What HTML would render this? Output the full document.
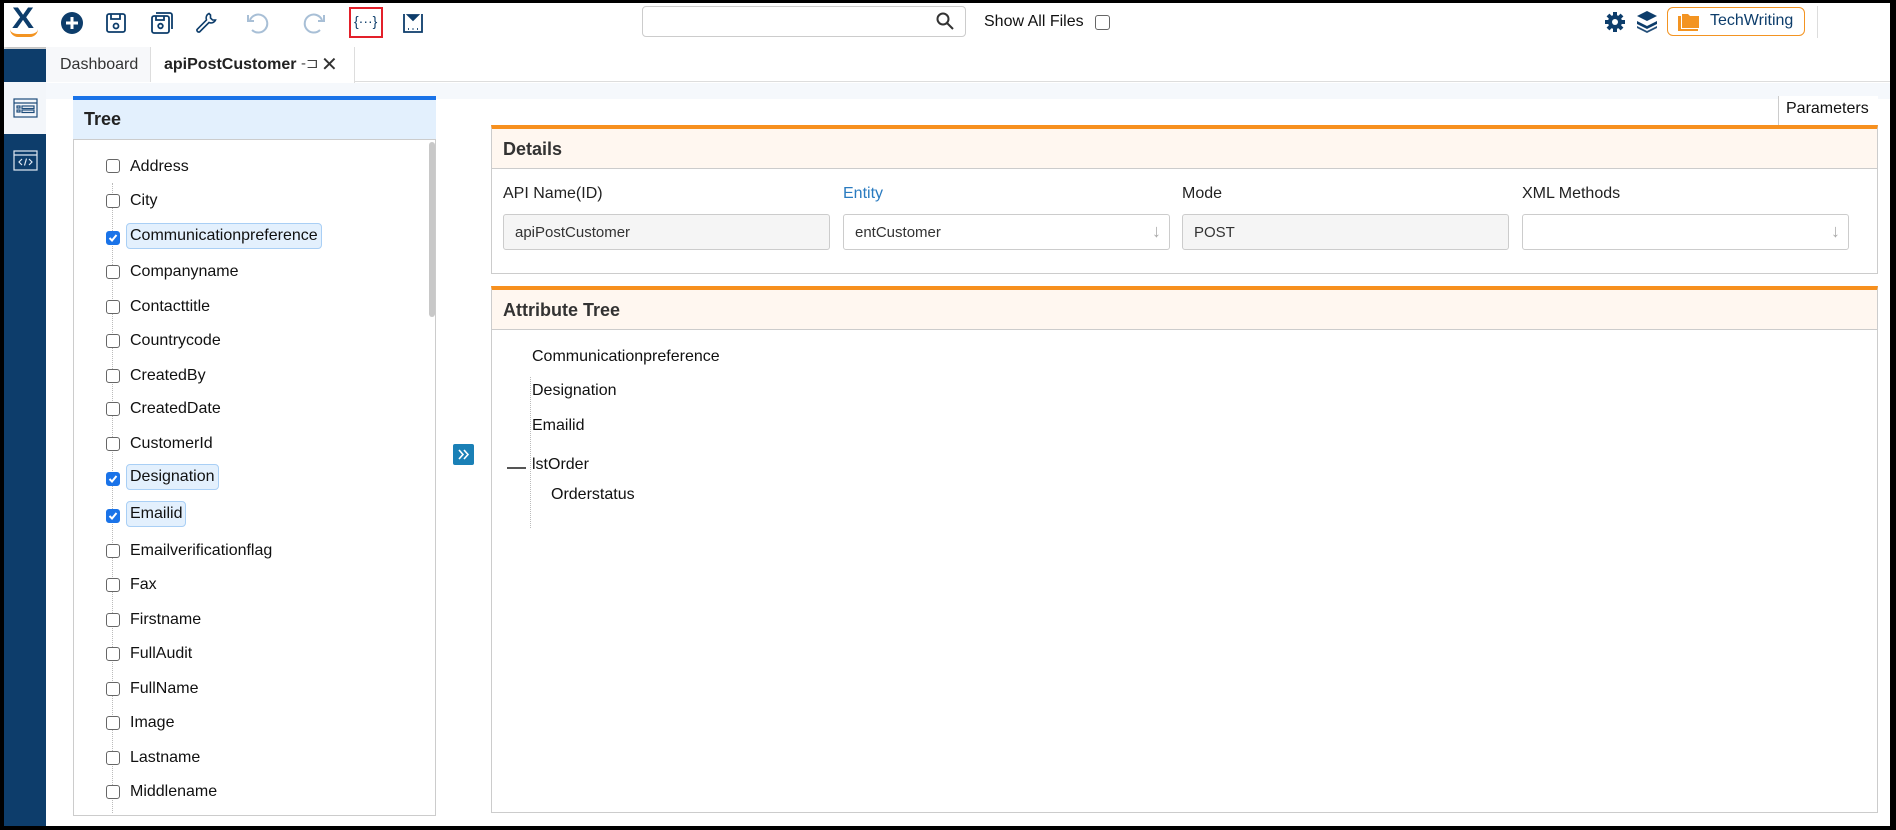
<!DOCTYPE html>
<html><head><meta charset="utf-8"><style>
*{box-sizing:border-box;margin:0;padding:0}
body{width:1896px;height:830px;background:#000;font-family:"Liberation Sans",sans-serif;color:#222;position:relative;overflow:hidden}
.a{position:absolute}
#app{position:absolute;left:4px;top:3px;width:1886px;height:823px;background:#fff;overflow:hidden}
.cb{position:absolute;width:14px;height:14px;border:1.5px solid #666;border-radius:3px;background:#fff}
.cb.on{background:#1a73e8;border-color:#1a73e8}
.it{position:absolute;font-size:16px;color:#111}
.hl{background:#e3f0fd;border:1px solid #a9cff5;border-radius:4px;padding:3px 3px}
.lbl{position:absolute;font-size:16px;color:#222;top:182px}
.inp{position:absolute;top:211px;height:36px;width:327px;border:1px solid #ccc;border-radius:3px;font-size:15px;color:#333;padding:9px 11px}
</style></head><body>
<div id="app">
<div class="a" style="left:0;top:0;width:1886px;height:44px;background:#fff;box-shadow:0 3px 4px rgba(0,0,0,.25)"></div>
<div class="a" style="left:9px;top:1px;font-size:30px;color:#0d3d6b;line-height:30px;font-weight:bold;transform:scaleX(1.1)">X</div>
<div class="a" style="left:6px;top:26px;width:28px;height:8px;border-bottom:3px solid #f39422;border-radius:0 0 14px 14px"></div>
<svg class="a" style="left:56px;top:8px" width="24" height="24"><circle cx="12" cy="12" r="11" fill="#0d3d6b"/><path d="M12 6v12M6 12h12" stroke="#fff" stroke-width="3"/></svg>
<svg class="a" style="left:100px;top:8px" width="24" height="24" fill="none" stroke="#0d3d6b" stroke-width="1.8"><rect x="3" y="3" width="18" height="18" rx="2"/><path d="M7 3v5h9V3"/><circle cx="12" cy="15" r="2.5"/></svg>
<svg class="a" style="left:145px;top:7px" width="26" height="26" fill="none" stroke="#0d3d6b" stroke-width="1.8"><rect x="3" y="6" width="17" height="17" rx="2"/><path d="M7 6v4h8V6M7 3h14a2 2 0 0 1 2 2v14"/><circle cx="11.5" cy="16" r="2.3"/></svg>
<svg class="a" style="left:190px;top:8px" width="24" height="24" fill="none" stroke="#0d3d6b" stroke-width="1.6"><path d="M15 2.5a5 5 0 0 0-2.5 6.5L3 18.5a2 2 0 0 0 2.5 2.5L15 11.5a5 5 0 0 0 6.5-2.5l-3 0-2-2 0-3z"/></svg>
<svg class="a" style="left:240px;top:8px" width="26" height="26" fill="none" stroke="#a8bfd6" stroke-width="2"><path d="M6 9a9 9 0 1 1 2 10"/><path d="M4 4v6h6"/></svg>
<svg class="a" style="left:298px;top:8px" width="26" height="26" fill="none" stroke="#a8bfd6" stroke-width="2"><path d="M20 9a9 9 0 1 0-2 10"/><path d="M22 4v6h-6"/></svg>
<div class="a" style="left:345px;top:4px;width:34px;height:31px;border:2.5px solid #e3202a"></div>
<div class="a" style="left:350px;top:10px;font-size:14px;color:#0d3d6b">{···}</div>
<svg class="a" style="left:398px;top:9px" width="22" height="22" fill="none" stroke="#0d3d6b" stroke-width="1.8"><path d="M2 2v18h18V2"/><path d="M6 3h10l-5 5z" fill="#0d3d6b"/><path d="M6 17h1M10.5 17h1M15 17h1"/></svg>
<div class="a" style="left:638px;top:3px;width:324px;height:31px;border:1px solid #ccc;border-radius:4px"></div>
<svg class="a" style="left:932px;top:9px" width="18" height="18" fill="none" stroke="#333" stroke-width="2"><circle cx="7" cy="7" r="5.5"/><path d="M11 11l6 6"/></svg>
<div class="a" style="left:980px;top:10px;font-size:16px;color:#111">Show All Files</div>
<div class="cb" style="left:1091px;top:12px;width:15px;height:15px"></div>
<svg class="a" style="left:1600px;top:8px" width="22" height="22"><g fill="#0d3d6b"><circle cx="11" cy="11" r="7"/><g stroke="#0d3d6b" stroke-width="4"><path d="M11 1v20M1 11h20M4 4l14 14M18 4L4 18"/></g></g><circle cx="11" cy="11" r="3" fill="#fff"/></svg>
<svg class="a" style="left:1632px;top:7px" width="22" height="24" fill="#0d3d6b"><path d="M11 1l10 5-10 5-10-5z"/><path d="M1 11l10 5 10-5v3l-10 5-10-5z"/><path d="M1 16l10 5 10-5v2l-10 5-10-5z" opacity=".9"/></svg>
<div class="a" style="left:1663px;top:4px;width:138px;height:29px;border:1px solid #f39422;border-radius:6px"></div>
<svg class="a" style="left:1673px;top:10px" width="24" height="18"><path d="M1 3h3v13h17v2H1z" fill="#f39422"/><path d="M5 1h6l2 2h9v12H5z" fill="#f39422"/></svg>
<div class="a" style="left:1706px;top:9px;font-size:16px;color:#0d3d6b">TechWriting</div>
<div class="a" style="left:1813px;top:3px;width:1px;height:32px;background:#ddd"></div>
<div class="a" style="left:0;top:46px;width:42px;height:780px;background:#0d3d6b"></div>
<div class="a" style="left:0;top:79px;width:42px;height:52px;background:#f3f6fa"></div>
<svg class="a" style="left:9px;top:95px" width="25" height="20" fill="none" stroke="#1e4d7b" stroke-width="1.2"><rect x="1" y="1" width="23" height="18"/><path d="M1 5h23"/><rect x="4" y="8" width="3" height="2"/><rect x="4" y="12" width="3" height="2"/><rect x="9" y="8" width="12" height="2.5"/><rect x="9" y="12" width="12" height="2.5"/></svg>
<svg class="a" style="left:9px;top:147px" width="25" height="21" fill="none" stroke="#dfe8f2" stroke-width="1.2"><rect x="1" y="1" width="23" height="19"/><path d="M1 5h23"/><path d="M9 9l-3 3 3 3M16 9l3 3-3 3M13.5 8.5l-2 7"/></svg>
<div class="a" style="left:42px;top:44px;width:1844px;height:35px;background:#fff;border-bottom:1px solid #ddd"></div>
<div class="a" style="left:42px;top:44px;width:105px;height:35px;background:#f7f8fa;border-right:1px solid #ddd"></div>
<div class="a" style="left:56px;top:53px;font-size:16px;color:#333">Dashboard</div>
<div class="a" style="left:147px;top:44px;width:204px;height:36px;background:#fff;border-right:1px solid #ddd"></div>
<div class="a" style="left:160px;top:53px;font-size:16px;font-weight:bold;color:#222">apiPostCustomer</div>
<div class="a" style="left:297px;top:51px;font-size:15px;color:#444">-⊐</div>
<div class="a" style="left:317px;top:49px;font-size:20px;color:#333">✕</div>
<div class="a" style="left:42px;top:80px;width:1844px;height:16px;background:#f5f8fc"></div>
<div class="a" style="left:69px;top:93px;width:363px;height:720px;border:1px solid #ccc;border-top:0;background:#fff"></div>
<div class="a" style="left:69px;top:93px;width:363px;height:44px;background:#e3f0fd;border-top:4px solid #1a73e8;border-bottom:1px solid #ccc"></div>
<div class="a" style="left:80px;top:106px;font-size:18px;font-weight:bold;color:#222">Tree</div>
<div class="a" style="left:425px;top:139px;width:6px;height:175px;background:#c8c8c8;border-radius:3px"></div>
<div class="a" style="left:108px;top:180px;height:630px;border-left:1px dotted #bbb"></div>
<div class="cb" style="left:102px;top:156px"></div><div class="it" style="left:126px;top:155px">Address</div>
<div class="cb" style="left:102px;top:191px"></div><div class="it" style="left:126px;top:189px">City</div>
<div class="cb on" style="left:102px;top:228px"></div><div class="it hl" style="left:122px;top:220px">Communicationpreference</div>
<svg class="a" style="left:104px;top:230px" width="10" height="10"><path d="M1.5 5l2.5 2.5L8.5 2" stroke="#fff" stroke-width="2" fill="none"/></svg>
<div class="cb" style="left:102px;top:262px"></div><div class="it" style="left:126px;top:260px">Companyname</div>
<div class="cb" style="left:102px;top:297px"></div><div class="it" style="left:126px;top:295px">Contacttitle</div>
<div class="cb" style="left:102px;top:331px"></div><div class="it" style="left:126px;top:329px">Countrycode</div>
<div class="cb" style="left:102px;top:366px"></div><div class="it" style="left:126px;top:364px">CreatedBy</div>
<div class="cb" style="left:102px;top:399px"></div><div class="it" style="left:126px;top:397px">CreatedDate</div>
<div class="cb" style="left:102px;top:434px"></div><div class="it" style="left:126px;top:432px">CustomerId</div>
<div class="cb on" style="left:102px;top:469px"></div><div class="it hl" style="left:122px;top:461px">Designation</div>
<svg class="a" style="left:104px;top:471px" width="10" height="10"><path d="M1.5 5l2.5 2.5L8.5 2" stroke="#fff" stroke-width="2" fill="none"/></svg>
<div class="cb on" style="left:102px;top:506px"></div><div class="it hl" style="left:122px;top:498px">Emailid</div>
<svg class="a" style="left:104px;top:508px" width="10" height="10"><path d="M1.5 5l2.5 2.5L8.5 2" stroke="#fff" stroke-width="2" fill="none"/></svg>
<div class="cb" style="left:102px;top:541px"></div><div class="it" style="left:126px;top:539px">Emailverificationflag</div>
<div class="cb" style="left:102px;top:575px"></div><div class="it" style="left:126px;top:573px">Fax</div>
<div class="cb" style="left:102px;top:610px"></div><div class="it" style="left:126px;top:608px">Firstname</div>
<div class="cb" style="left:102px;top:644px"></div><div class="it" style="left:126px;top:642px">FullAudit</div>
<div class="cb" style="left:102px;top:679px"></div><div class="it" style="left:126px;top:677px">FullName</div>
<div class="cb" style="left:102px;top:713px"></div><div class="it" style="left:126px;top:711px">Image</div>
<div class="cb" style="left:102px;top:748px"></div><div class="it" style="left:126px;top:746px">Lastname</div>
<div class="cb" style="left:102px;top:782px"></div><div class="it" style="left:126px;top:780px">Middlename</div>
<div class="a" style="left:449px;top:441px;width:21px;height:21px;background:#1a80b6;border-radius:2px"></div>
<svg class="a" style="left:452px;top:444px" width="15" height="15" fill="none" stroke="#fff" stroke-width="1.6"><path d="M3 3l4 4.5-4 4.5M8 3l4 4.5-4 4.5"/></svg>
<div class="a" style="left:1774px;top:93px;width:100px;height:31px;border-left:1px solid #ccc;background:#fff"></div>
<div class="a" style="left:1782px;top:97px;font-size:16px;color:#111">Parameters</div>
<div class="a" style="left:487px;top:122px;width:1387px;height:149px;border:1px solid #ccc;border-top:4px solid #f7901e"></div>
<div class="a" style="left:488px;top:126px;width:1385px;height:40px;background:#fff7f0;border-bottom:1px solid #ccc"></div>
<div class="a" style="left:499px;top:136px;font-size:18px;font-weight:bold;color:#333">Details</div>
<div class="lbl" style="left:499px">API Name(ID)</div>
<div class="lbl" style="left:839px;color:#2a7bc0">Entity</div>
<div class="lbl" style="left:1178px">Mode</div>
<div class="lbl" style="left:1518px">XML Methods</div>
<div class="inp" style="left:499px;background:#f5f5f5">apiPostCustomer</div>
<div class="inp" style="left:839px;background:#fff">entCustomer<span style="position:absolute;right:8px;top:6px;color:#aaa;font-size:18px">↓</span></div>
<div class="inp" style="left:1178px;background:#f5f5f5">POST</div>
<div class="inp" style="left:1518px;background:#fff"><span style="position:absolute;right:8px;top:6px;color:#aaa;font-size:18px">↓</span></div>
<div class="a" style="left:487px;top:283px;width:1387px;height:527px;border:1px solid #ccc;border-top:4px solid #f7901e"></div>
<div class="a" style="left:488px;top:287px;width:1385px;height:40px;background:#fff7f0;border-bottom:1px solid #ccc"></div>
<div class="a" style="left:499px;top:297px;font-size:18px;font-weight:bold;color:#333">Attribute Tree</div>
<div class="a" style="left:526px;top:374px;height:151px;border-left:1px dotted #bbb"></div>
<div class="it" style="left:528px;top:345px">Communicationpreference</div>
<div class="it" style="left:528px;top:379px">Designation</div>
<div class="it" style="left:528px;top:414px">Emailid</div>
<div class="a" style="left:503px;top:464px;width:19px;height:2px;background:#555"></div>
<div class="it" style="left:528px;top:453px">lstOrder</div>
<div class="it" style="left:547px;top:483px">Orderstatus</div>
</div>
</body></html>
